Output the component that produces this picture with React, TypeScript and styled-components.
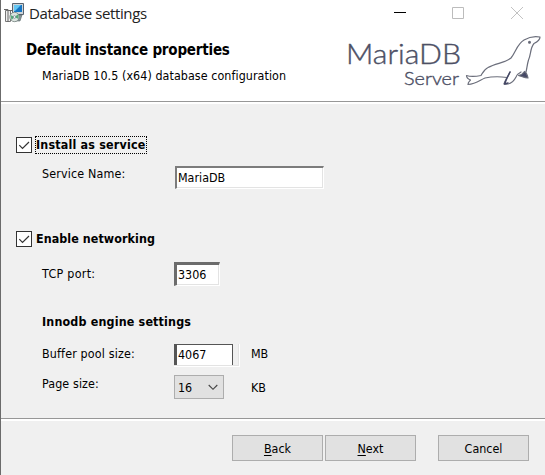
import React from "react";
import styled, { createGlobalStyle } from "styled-components";

const GlobalStyle = createGlobalStyle`
  * { box-sizing: border-box; }
  body { margin: 0; background: #f0f0f0; overflow: hidden; }
`;

const Window = styled.main`
  width: 545px;
  height: 475px;
  display: flex;
  flex-direction: column;
  border-left: 1px solid #6b6b6b;
  background: #f0f0f0;
  color: #000;
  font: 12.4px/16px "DejaVu Sans Condensed", "DejaVu Sans", sans-serif;
  font-stretch: condensed;
`;

const TitleBar = styled.header`
  height: 27px;
  flex: none;
  display: flex;
  align-items: flex-start;
  padding: 3px 0 0 3px;
  background: #fff;
`;

const WindowTitle = styled.h1`
  margin: -1px auto 0 5px;
  font: 400 15px/22px "Open Sans", sans-serif;
  letter-spacing: -0.4px;
  color: #222;
`;

const Caption = styled.div`
  width: 180px;
  height: 20px;
  display: flex;
`;

const Banner = styled.section`
  height: 77px;
  flex: none;
  display: flex;
  justify-content: space-between;
  background: #fff;
  border-bottom: 2px solid #fff;
  box-shadow: inset 0 -1px #979797;
`;

const BannerText = styled.div`
  padding: 12px 0 0 25px;
`;

const Text = styled.span<{ $spacing?: number; $top?: number }>`
  display: block;
  white-space: nowrap;
  letter-spacing: ${(p) => p.$spacing ?? 0}px;
  margin-top: ${(p) => p.$top ?? 0}px;
`;

const BannerTitle = styled.h2`
  margin: 0;
  font-size: 15px;
  line-height: 22px;
  letter-spacing: -0.21px;
  white-space: nowrap;
`;

const BannerSubtitle = styled(Text)`
  margin: 7px 0 0 16px;
`;

const Form = styled.section`
  height: 317px;
  flex: none;
  display: flex;
  flex-direction: column;
  padding-top: 32px;
  border-bottom: 2px solid #fff;
  box-shadow: inset 0 -1px #979797;
`;

const CheckRow = styled.label<{ $gap?: number }>`
  height: 18px;
  display: flex;
  align-items: center;
  margin: ${(p) => p.$gap ?? 0}px 0 0 15px;
`;

const CheckBox = styled.span`
  width: 16px;
  height: 16px;
  display: flex;
  border: 1px solid #333;
  background: #fff;
`;

const CheckLabel = styled.strong<{ $focused?: boolean; $spacing: number }>`
  height: 18px;
  line-height: 16px;
  margin-left: 3px;
  border: 1px ${(p) => (p.$focused ? "dotted #000" : "solid transparent")};
  letter-spacing: ${(p) => p.$spacing}px;
  white-space: nowrap;
`;

const FieldRow = styled.div<{ $gap: number; $height: number }>`
  height: ${(p) => p.$height}px;
  display: grid;
  grid-template-columns: 132px 77px auto;
  align-items: start;
  margin: ${(p) => p.$gap}px 0 0 41px;
`;

const Field = styled.div<{ $width: number; $height: number; $indent?: number; $heavy?: boolean }>`
  width: ${(p) => p.$width}px;
  height: ${(p) => p.$height}px;
  margin-left: ${(p) => p.$indent ?? 0}px;
  padding: 2px 0 0 1px;
  border: 1px solid #fff;
  border-width: ${(p) => (p.$heavy ? "3px 1px 1px 3px" : "2px 1px 1px 2px")};
  border-top-color: ${(p) => (p.$heavy ? "#6c6c6c" : "#7c7c7c")};
  border-left-color: ${(p) => (p.$heavy ? "#6c6c6c" : "#7c7c7c")};
  background: #fff;
  box-shadow: inset -1px -1px #e3e3e3;
`;

const SpinField = styled.div`
  width: 66px;
  height: 23px;
  display: flex;
  border: 1px solid #fff;
  border-width: 0 1px 1px 0;
  box-shadow: inset -1px -1px #e3e3e3;
`;

const SpinValue = styled.div`
  width: 59px;
  height: 21px;
  padding: 2px 0 0 1px;
  border: 1px solid #555;
  border-width: 1px 1px 0 3px;
  background: #fff;
`;

const Select = styled.div`
  width: 50px;
  height: 24px;
  display: flex;
  align-items: center;
  justify-content: space-between;
  padding: 1px 5px 0 3px;
  border: 1px solid #adadad;
  background: #e1e1e1;
`;

const SectionTitle = styled.h3`
  height: 18px;
  margin: 28px 0 0 41px;
  font-size: inherit;
  line-height: 16px;
  letter-spacing: 0.17px;
`;

const Footer = styled.footer`
  flex: 1;
  display: flex;
  gap: 2px;
  padding: 14px 0 0 231px;
`;

const Button = styled.button<{ $apart?: boolean }>`
  width: 91px;
  height: 26px;
  margin-left: ${(p) => (p.$apart ? 20 : 0)}px;
  padding: 1px 0 0;
  border: 1px solid #adadad;
  background: #e1e1e1;
  color: #000;
  font: inherit;
  u { text-underline-offset: 2px; }
`;

const InstallerIcon = () => (
  <svg width="20" height="20" viewBox="0 0 20 20">
    <path d="M8.500 .5h11v11h-11z" fill="#cdd4d8" stroke="#59636f" />
    <path d="M10 2h8v7h-8z" fill="#1475c4" />
    <path d="M10 2h7l-6 6h-1z" fill="#65c7f3" />
    <path d="M10 12h8l-2 6h-6z" fill="#8b969b" stroke="#566" strokeWidth=".6" />
    <path d="M1.500 7.500h5v11h-5z" fill="#eee" stroke="#777" />
    <path d="M0 6.500h4l1 1h4M4 7v12" stroke="#666" fill="none" />
    <circle cx="10.500" cy="14" r="4.700" fill="#dce5e0" stroke="#73807d" strokeWidth=".8" />
    <path d="M10.500 14l-4-2 1 5zM10.500 14l4-3v5z" fill="#55a878" />
    <circle cx="10.500" cy="14" r="1.300" fill="#fff" stroke="#567" strokeWidth=".6" />
  </svg>
);

const Tick = () => (
  <svg width="14" height="14" viewBox="0 0 14 14">
    <path d="M2.300 7.200 5.500 10.500 12 4" fill="none" stroke="#333" strokeWidth="1.2" />
  </svg>
);

const WindowControls = () => (
  <svg width="180" height="20" viewBox="365 3 180 20">
    <path d="M394 12.500h12" stroke="#000" />
    <path d="M452.500 7.500h11v11h-11z" fill="none" stroke="#bcbcbc" />
    <path d="m511 7 12 12m0-12-12 12" fill="none" stroke="#bbb" strokeWidth=".9" />
  </svg>
);

const MariaLogo = () => (
  <svg width="205" height="72" viewBox="340 27 205 72">
    <g fill="#4d5065" stroke="#4d5065" strokeWidth=".4" fontFamily="Lato" fontWeight="300">
      <text x="346" y="64" textLength="115" lengthAdjust="spacingAndGlyphs" fontSize="27">MariaDB</text>
      <text x="404" y="85" textLength="55" lengthAdjust="spacingAndGlyphs" fontSize="18.500">Server</text>
    </g>
    <g fill="none" stroke="#6b6e7b" strokeWidth="1.2" strokeLinejoin="round" strokeLinecap="round">
      <path d="M507 77.500C500 76.500 492 76.500 485 78C480 80 476 84 468 84.500C468 82 470 81 470.500 80C468 79 466.500 78 466.500 75.500C471 77 476 76.500 481 75.500C483 72 484 69.500 488 67.500C496 63 505 63 511 58C516 52 517 44 524 40C529 37 535 36 540 37C540 40 538 41.500 534 43.500C530 48 531 55 528.500 60C527 65 527 68 526 72" />
      <path d="M510 72C508 77 505 80 504 84C510 85 514 81 516 77C517 74.500 519 73 521 72" />
      <path d="M510 72 507 78 504.500 84 508 83" stroke="#454866" strokeWidth="1.500" />
      <path d="M524.500 71.500C523 74 521 75 518.500 75.500C522 76.500 525 78 528 78C527.500 75.500 527 73 524.500 71.500z" fill="#454866" />
      <circle cx="529.500" cy="42.300" r=".9" fill="#4d5065" />
    </g>
  </svg>
);

const Chevron = () => (
  <svg width="10" height="7" viewBox="0 0 10 7">
    <path d="m.7 1 4.300 4.300L9.300 1" fill="none" stroke="#444" strokeWidth="1.1" />
  </svg>
);

export default function App() {
  return (
    <>
      <GlobalStyle />
      <Window>
        <TitleBar>
          <InstallerIcon />
          <WindowTitle>Database settings</WindowTitle>
          <Caption><WindowControls /></Caption>
        </TitleBar>
        <Banner>
          <BannerText>
            <BannerTitle>Default instance properties</BannerTitle>
            <BannerSubtitle $spacing={0.07}>MariaDB 10.5 (x64) database configuration</BannerSubtitle>
          </BannerText>
          <MariaLogo />
        </Banner>
        <Form>
          <CheckRow>
            <CheckBox><Tick /></CheckBox>
            <CheckLabel $focused $spacing={0.19}>Install as service</CheckLabel>
          </CheckRow>
          <FieldRow $gap={12} $height={23}>
            <Text $spacing={0.15}>Service Name:</Text>
            <Field $width={149} $height={23} $indent={1}><Text>MariaDB</Text></Field>
          </FieldRow>
          <CheckRow $gap={41}>
            <CheckBox><Tick /></CheckBox>
            <CheckLabel $spacing={0.07}>Enable networking</CheckLabel>
          </CheckRow>
          <FieldRow $gap={14} $height={24}>
            <Text $top={4} $spacing={0.3}>TCP port:</Text>
            <Field $width={46} $height={24} $heavy><Text>3306</Text></Field>
          </FieldRow>
          <SectionTitle>Innodb engine settings</SectionTitle>
          <FieldRow $gap={12} $height={23}>
            <Text $top={2} $spacing={0.15}>Buffer pool size:</Text>
            <SpinField><SpinValue><Text>4067</Text></SpinValue></SpinField>
            <Text $top={2}>MB</Text>
          </FieldRow>
          <FieldRow $gap={8} $height={24}>
            <Text $top={1} $spacing={0.1}>Page size:</Text>
            <Select><Text>16</Text><Chevron /></Select>
            <Text $top={5}>KB</Text>
          </FieldRow>
        </Form>
        <Footer>
          <Button><u>B</u>ack</Button>
          <Button><u>N</u>ext</Button>
          <Button $apart>Cancel</Button>
        </Footer>
      </Window>
    </>
  );
}
